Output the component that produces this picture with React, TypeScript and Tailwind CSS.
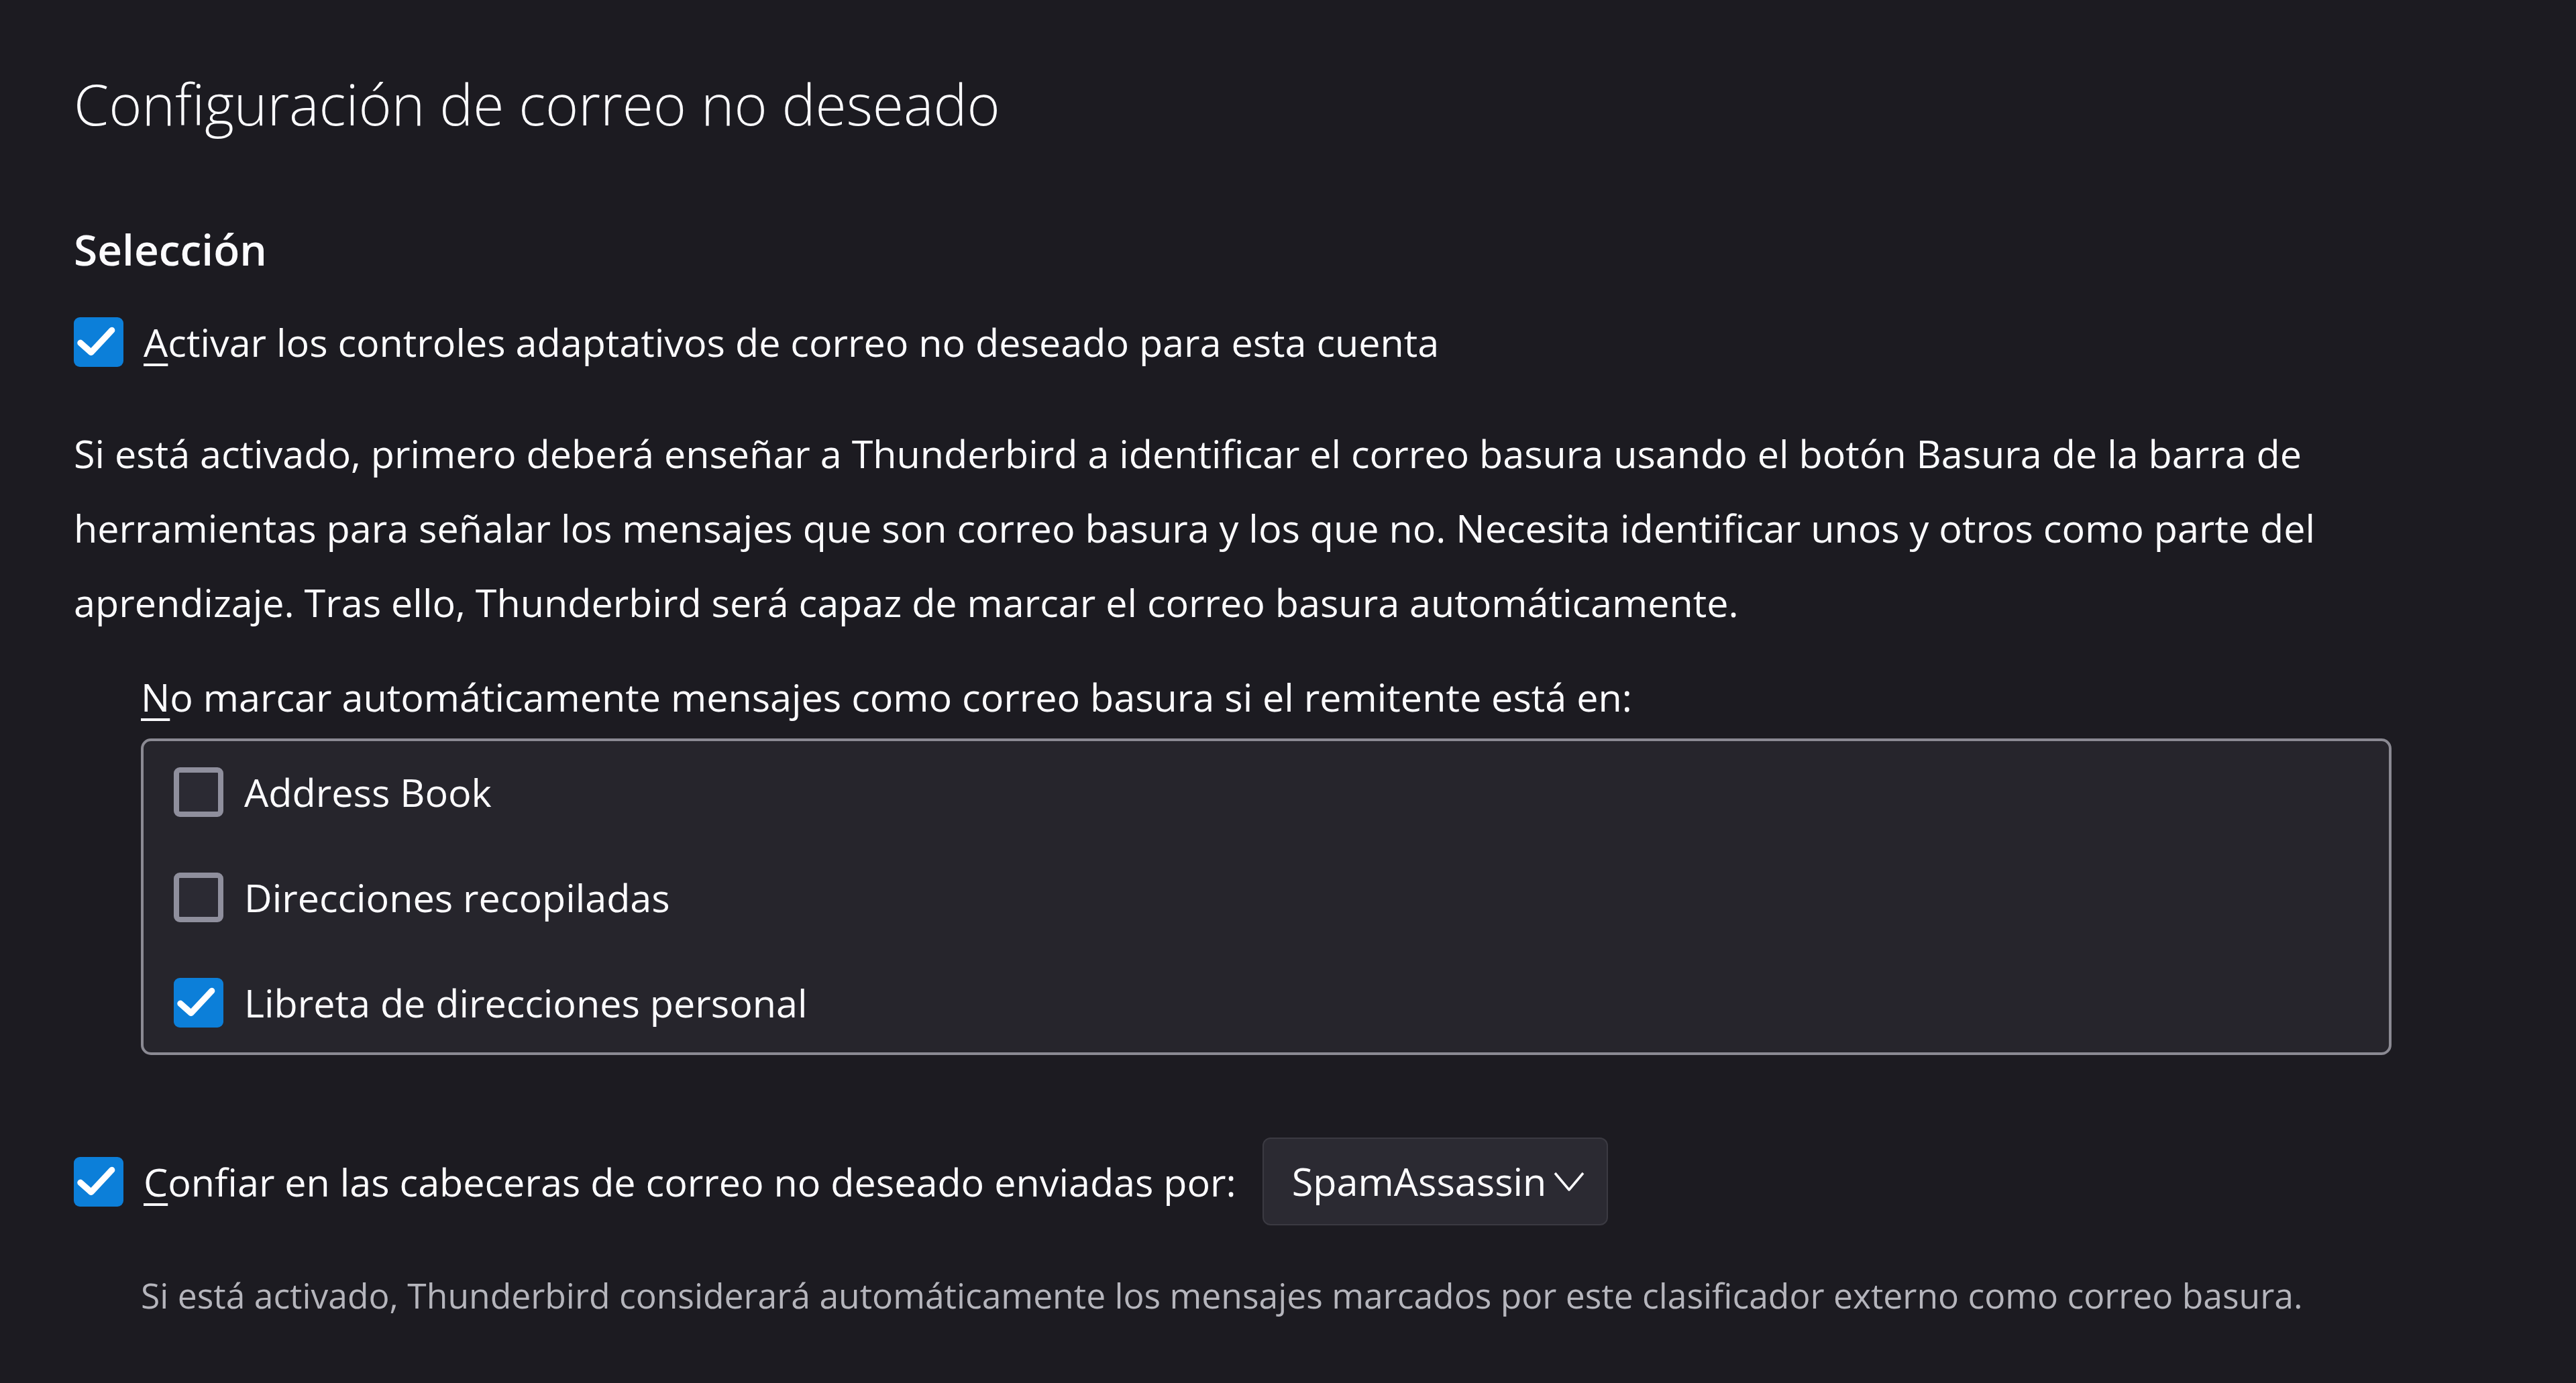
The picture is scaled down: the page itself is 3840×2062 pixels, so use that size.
import React from 'react';

const FONT = "font-['Open_Sans','Noto_Sans',sans-serif]";

const CheckBox: React.FC<{ checked?: boolean }> = ({ checked }) =>
  checked ? (
    <span className="flex h-[74px] w-[74px] shrink-0 items-center justify-center rounded-[9px] bg-[#0c7fd9]">
      <svg viewBox="0 0 24 24" className="h-[74px] w-[74px]" fill="none">
        <path d="M3.2 12.4 L8.4 17 L18.4 6.3" stroke="#ffffff" strokeWidth="3" strokeLinecap="round" strokeLinejoin="round" />
      </svg>
    </span>
  ) : (
    <span className="block h-[74px] w-[74px] shrink-0 rounded-[9px] border-[8px] border-[#8f8f9d] bg-[#2b2a33]" />
  );

const AccessLabel: React.FC<{ k: string; rest: string }> = ({ k, rest }) => (
  <span>
    <span className="underline decoration-[4px] underline-offset-[10px]">{k}</span>
    {rest}
  </span>
);

const BoxRow: React.FC<{ checked?: boolean; label: string }> = ({ checked, label }) => (
  <div className="flex h-[74px] items-center gap-[31px]">
    <CheckBox checked={checked} />
    <span className="text-[57.5px] leading-[74px]">{label}</span>
  </div>
);

export default function App() {
  return (
    <div className={`min-h-screen w-full bg-[#1c1b21] pl-[110px] pt-[105px] pb-[120px] text-[#fbfbfe] ${FONT}`}>
      <h1 className="text-[84px] font-light leading-[100px]">Configuración de correo no deseado</h1>

      <h2 className="mt-[127px] text-[64px] font-semibold leading-[80px]">Selección</h2>

      <label className="mt-[61px] flex h-[74px] items-center gap-[30px]">
        <CheckBox checked />
        <span className="text-[57.5px] leading-[74px]">
          <AccessLabel k="A" rest="ctivar los controles adaptativos de correo no deseado para esta cuenta" />
        </span>
      </label>

      <p className="mt-[74px] whitespace-nowrap text-[57.5px] leading-[111px]">
        Si está activado, primero deberá enseñar a Thunderbird a identificar el correo basura usando el botón Basura de la barra de
        <br />
        herramientas para señalar los mensajes que son correo basura y los que no. Necesita identificar unos y otros como parte del
        <br />
        aprendizaje. Tras ello, Thunderbird será capaz de marcar el correo basura automáticamente.
      </p>

      <div className="ml-[100px] mt-[48px] w-[3355px]">
        <div className="text-[57.5px] leading-[74px]">
          <AccessLabel k="N" rest="o marcar automáticamente mensajes como correo basura si el remitente está en:" />
        </div>
        <div className="mt-[25px] flex flex-col gap-[83px] rounded-[15px] border-[4px] border-[#8b8a93] bg-[#26252c] pb-[37px] pl-[45px] pt-[39px]">
          <BoxRow label="Address Book" />
          <BoxRow label="Direcciones recopiladas" />
          <BoxRow checked label="Libreta de direcciones personal" />
        </div>
      </div>

      <div className="mt-[123px] flex h-[131px] items-center">
        <CheckBox checked />
        <span className="ml-[30px] text-[57.5px] leading-[74px]">
          <AccessLabel k="C" rest="onfiar en las cabeceras de correo no deseado enviadas por:" />
        </span>
        <button className="ml-[39px] flex h-[131px] w-[515px] items-center justify-between rounded-[12px] border-[2px] border-[#3b3a42] bg-[#2b2a32] pl-[42px] pr-[33px] text-[57.5px] text-[#fbfbfe]">
          <span>SpamAssassin</span>
          <svg viewBox="0 0 46 30" className="h-[30px] w-[46px]" fill="none">
            <path d="M2 2 L23 27 L44 2" stroke="#fbfbfe" strokeWidth="3.5" strokeLinejoin="round" />
          </svg>
        </button>
      </div>

      <p className="ml-[100px] mt-[69px] text-[51.6px] leading-[70px] text-[#b5b5bc]">
        Si está activado, Thunderbird considerará automáticamente los mensajes marcados por este clasificador externo como correo basura.
      </p>
    </div>
  );
}
